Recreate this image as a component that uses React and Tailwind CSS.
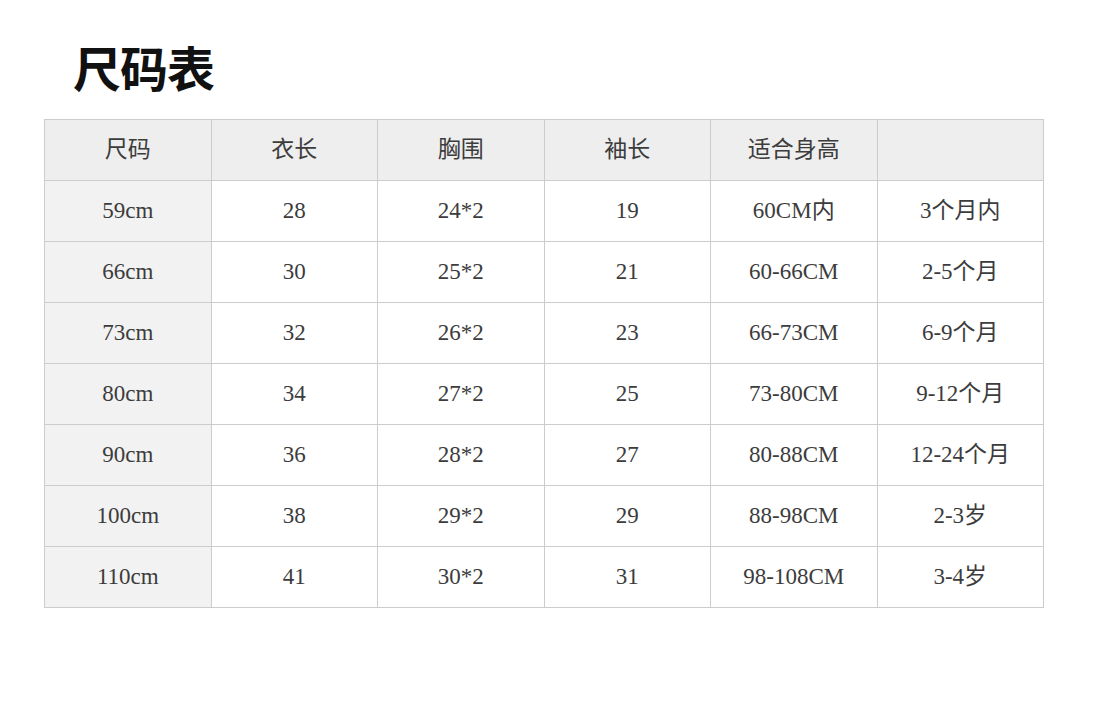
const headers = ['尺码', '衣长', '胸围', '袖长', '适合身高', '']

const rows = [
  ['59cm', '28', '24*2', '19', '60CM内', '3个月内'],
  ['66cm', '30', '25*2', '21', '60-66CM', '2-5个月'],
  ['73cm', '32', '26*2', '23', '66-73CM', '6-9个月'],
  ['80cm', '34', '27*2', '25', '73-80CM', '9-12个月'],
  ['90cm', '36', '28*2', '27', '80-88CM', '12-24个月'],
  ['100cm', '38', '29*2', '29', '88-98CM', '2-3岁'],
  ['110cm', '41', '30*2', '31', '98-108CM', '3-4岁'],
]

export default function App() {
  return (
    <div className="w-[1116px] h-[722px] bg-white overflow-hidden">
      <h1 className="pl-[73px] pt-[36px] h-[119px] text-[48px] leading-[60px] font-bold text-[#111] tracking-[-1px] font-['Noto_Sans_CJK_SC',sans-serif]">
        尺码表
      </h1>
      <div className="pl-[44px]">
        <table className="w-[1000px] table-fixed border-collapse text-[23px] text-[#3c3c3c] font-['Liberation_Serif','Noto_Sans_CJK_SC',serif]">
          <thead>
            <tr className="h-[61px] bg-[#eeeeee]">
              {headers.map((h, i) => (
                <th key={i} className="border border-[#cccccc] font-normal text-center">{h}</th>
              ))}
            </tr>
          </thead>
          <tbody>
            {rows.map((r, i) => (
              <tr key={i} className="h-[61px]">
                {r.map((c, j) => (
                  <td
                    key={j}
                    className={'border border-[#cccccc] text-center ' + (j === 0 ? 'bg-[#f2f2f2]' : 'bg-white')}>
                    {c}
                  </td>
                ))}
              </tr>
            ))}
          </tbody>
        </table>
      </div>
    </div>
  )
}
